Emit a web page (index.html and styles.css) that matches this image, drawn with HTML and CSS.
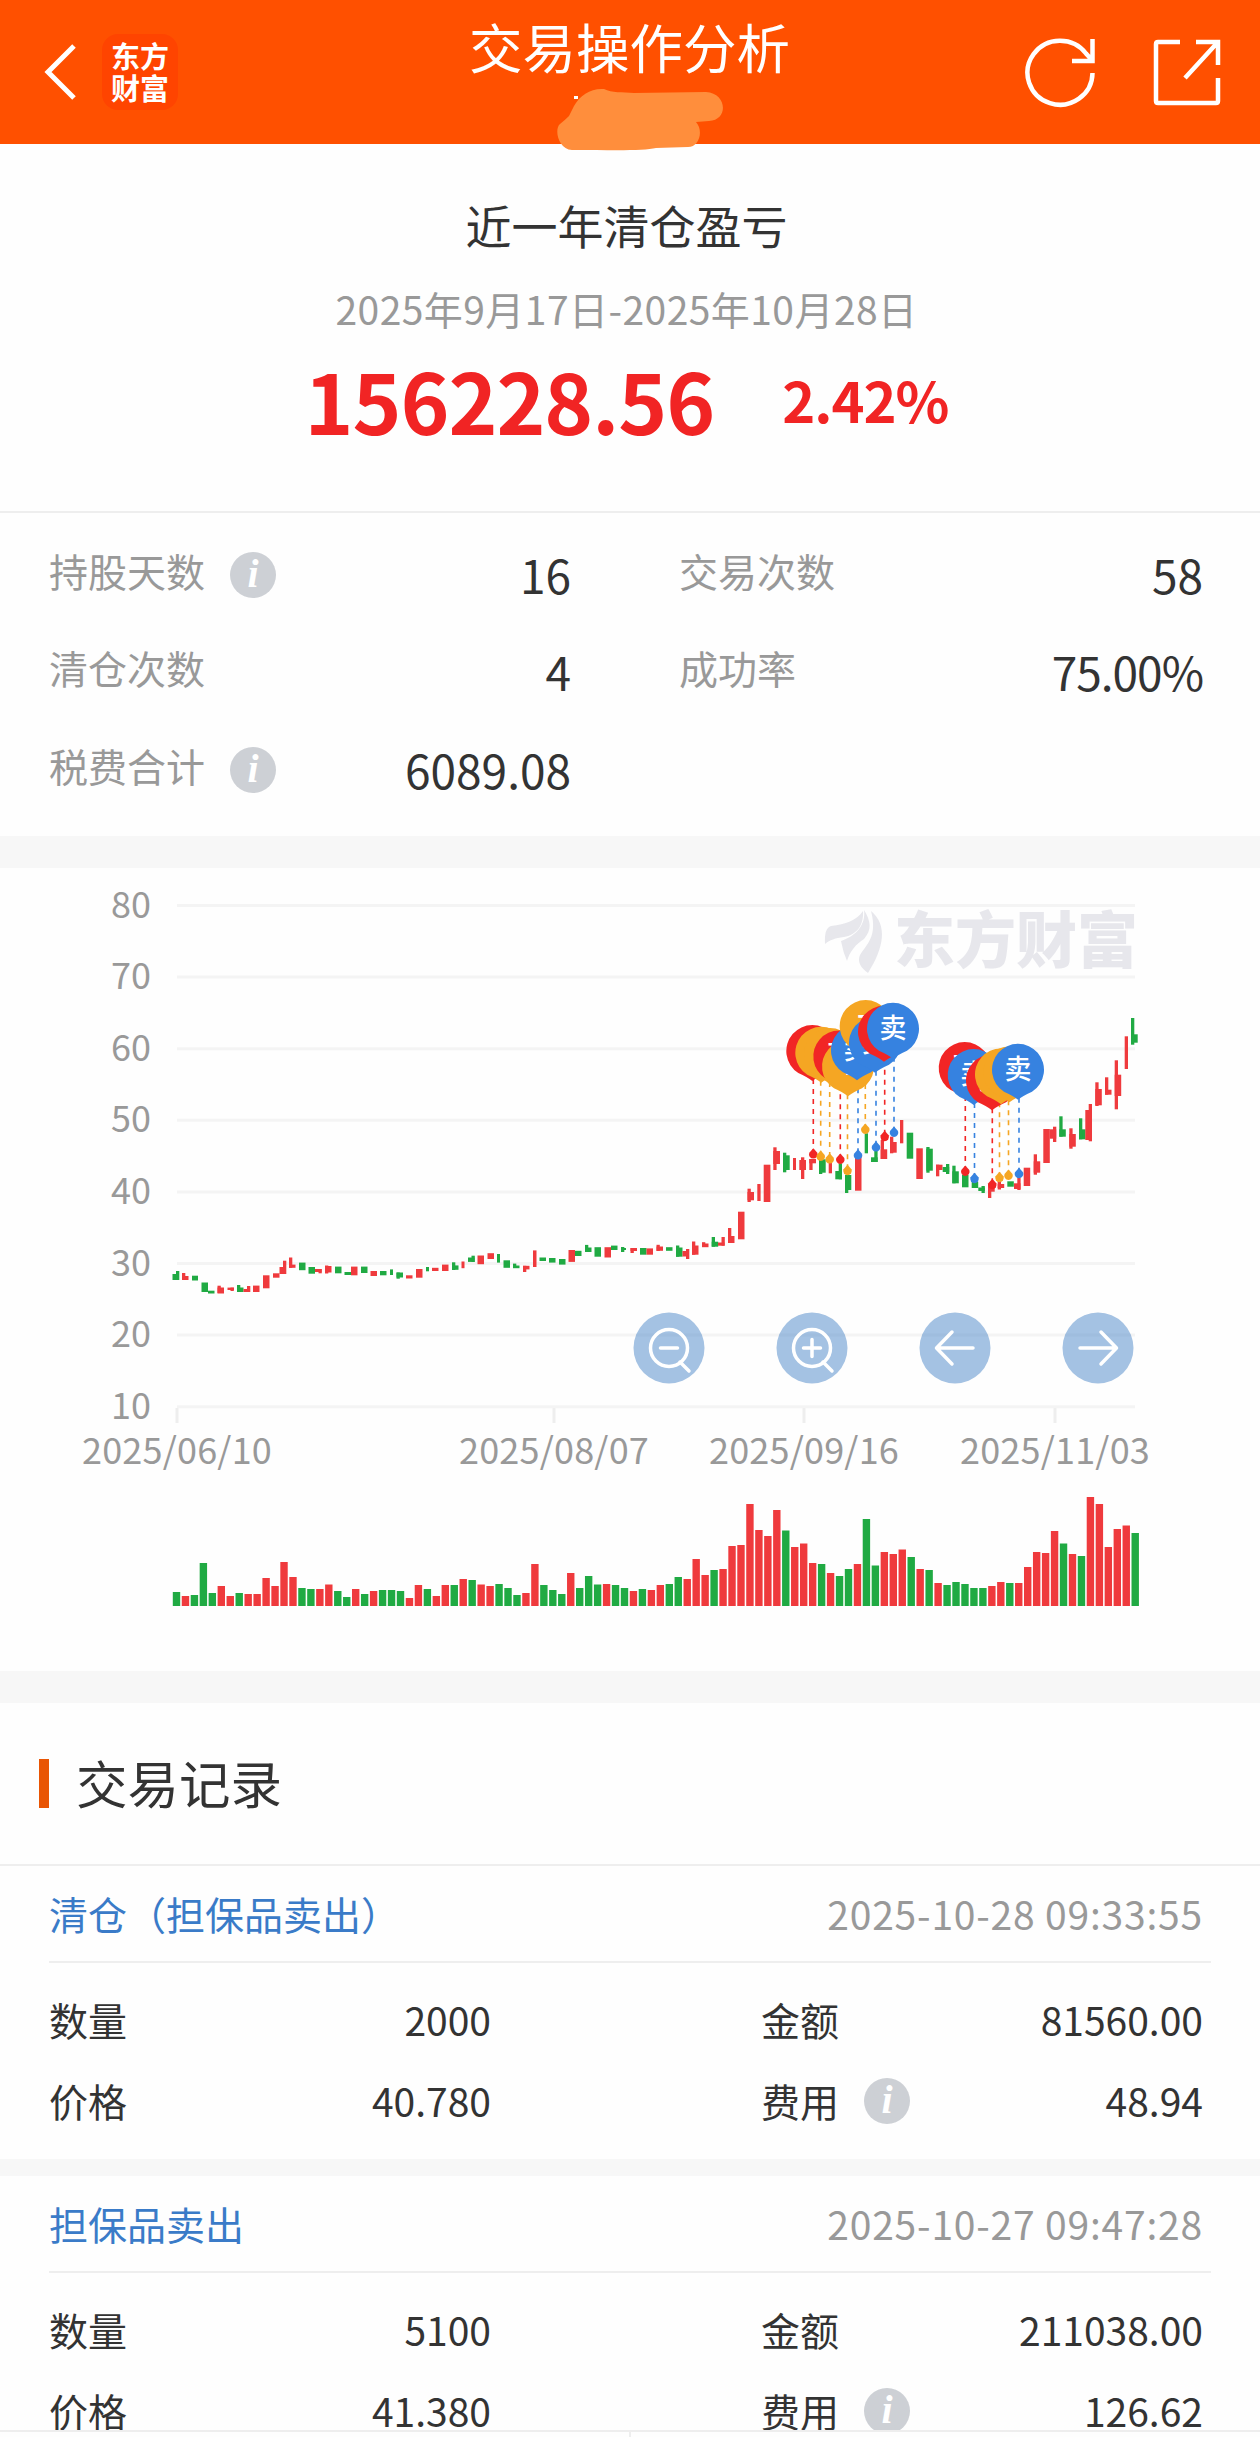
FILE: index.html
```html
<!DOCTYPE html>
<html lang="zh-CN">
  <head>
    <meta charset="UTF-8" />
    <meta name="viewport" content="width=device-width, initial-scale=1.0" />
    <title>交易操作分析</title>
    <link rel="stylesheet" href="styles.css">
  </head>
  <body>
    <header class="topbar">
      <div class="topbar-left">
        <svg class="back" viewBox="0 0 36 60"><path d="M32 4 6 30 32 56" /></svg>
        <div class="brand"><span>东方</span><span>财富</span></div>
      </div>
      <h1>交易操作分析</h1>
      <div class="topbar-right">
        <svg class="icon" viewBox="0 0 72 72">
          <path d="M68.500 37A32.500 32 0 1 1 62 17.500L68 24M68.500 3V25H48" />
        </svg>
        <svg class="icon" viewBox="0 0 72 72">
          <path d="M28 6H6Q4 6 4 8V65Q4 67 6 67H64Q66 67 66 65V42M44 6H66V29M66 6 33 42" />
        </svg>
      </div>
      <svg class="scribble" viewBox="0 0 170 64">
        <path class="speck" d="M18 8h4v3h-4z" />
        <path d="M18 18C24 7 35 0 48 1C56 5 66 4 78 5L150 4C171 5 173 32 153 33L140 34C148 43 143 59 132 59L100 60C88 63 60 62 16 62C2 61-2 41 4 36Q9 32 13 28Z" />
      </svg>
    </header>

    <main>
      <section class="summary">
        <h2>近一年清仓盈亏</h2>
        <div class="period">2025年9月17日-2025年10月28日</div>
        <div class="profit">
          <span class="amount">156228.56</span>
          <span class="rate">2.42%</span>
        </div>
      </section>

      <section class="stats">
        <div class="stat"><label>持股天数</label><i class="info">i</i><b>16</b></div>
        <div class="stat"><label>交易次数</label><b>58</b></div>
        <div class="stat"><label>清仓次数</label><b>4</b></div>
        <div class="stat"><label>成功率</label><b class="percent">75.00%</b></div>
        <div class="stat"><label>税费合计</label><i class="info">i</i><b>6089.08</b></div>
      </section>

      <section class="chart">
        <svg id="chart" viewBox="0 0 1260 803">
          <g id="grid"></g>
          <g class="watermark">
            <path d="M825 76Q824 60 831 58C846 56 856 53 863 43C864 58 856 67 844 69C835 70 830 72 825 76Z" />
            <path d="M841 73C856 68 866 57 864 42C871 53 872 62 864 71C856 76 850 83 847 93Q843 84 841 73Z" />
            <path d="M871 43C888 57 884 80 868 105C861 100 857 94 860 87C866 77 878 69 871 43Z" />
            <text x="894" y="95">东方财富</text>
          </g>
          <g id="candles"></g>
          <g id="marks"></g>
          <g id="volumes"></g>
        </svg>
        <div class="chart-tools">
          <svg viewBox="0 0 72 72"><circle class="disc" cx="36" cy="36" r="35.500" /><circle cx="36" cy="36" r="18.500" /><path d="M27.500 36h17M47 50l9 9" /></svg>
          <svg viewBox="0 0 72 72"><circle class="disc" cx="36" cy="36" r="35.500" /><circle cx="36" cy="36" r="18.500" /><path d="M27.500 36h17M36 27.500v17M47 50l9 9" /></svg>
          <svg viewBox="0 0 72 72"><circle class="disc" cx="36" cy="36" r="35.500" /><path d="M54 36H18M33 20 17.500 36 33 52" /></svg>
          <svg viewBox="0 0 72 72"><circle class="disc" cx="36" cy="36" r="35.500" /><path d="M18 36H54M39 20 54.500 36 39 52" /></svg>
        </div>
      </section>

      <section class="records">
        <h3>交易记录</h3>
        <div class="record">
          <div class="record-head"><a>清仓（担保品卖出）</a><time>2025-10-28 09:33:55</time></div>
          <div class="record-body">
            <div class="cell"><label>数量</label><b>2000</b></div>
            <div class="cell"><label>金额</label><b>81560.00</b></div>
            <div class="cell"><label>价格</label><b>40.780</b></div>
            <div class="cell"><label>费用</label><i class="info">i</i><b>48.94</b></div>
          </div>
        </div>
        <div class="record">
          <div class="record-head"><a>担保品卖出</a><time>2025-10-27 09:47:28</time></div>
          <div class="record-body">
            <div class="cell"><label>数量</label><b>5100</b></div>
            <div class="cell"><label>金额</label><b>211038.00</b></div>
            <div class="cell"><label>价格</label><b>41.380</b></div>
            <div class="cell"><label>费用</label><i class="info">i</i><b>126.62</b></div>
          </div>
        </div>
      </section>
    </main>

    <footer class="tabs"><div></div><div></div></footer>

    <script src="chart.js"></script>
  </body>
</html>
```
FILE: styles.css
```css
* {
  box-sizing: border-box;
}
body {
  margin: 0;
  height: 2437px;
  display: flex;
  flex-direction: column;
  overflow: hidden;
  background: #fefefe;
  color: #333;
  font-family: "Noto Sans CJK SC", sans-serif;
  font-size: 39px;
}
h1,
h2,
h3 {
  margin: 0;
  font-weight: 400;
}
b {
  font-weight: 400;
}
svg {
  display: block;
}

/* top bar */
.topbar {
  position: relative;
  flex: none;
  height: 144px;
  padding: 0 36px 0 42px;
  display: grid;
  grid-template-columns: 1fr auto 1fr;
  background: #ff5000;
  color: #fff;
}
.topbar h1 {
  padding-right: 7px;
  font-size: 53.5px;
  line-height: 92px;
}
.topbar-left,
.topbar-right {
  display: flex;
  align-items: center;
}
.topbar-right {
  justify-content: flex-end;
  gap: 56px;
}
.back {
  width: 36px;
  height: 60px;
}
.back path,
.icon path {
  fill: none;
  stroke: #fff;
  stroke-width: 5;
}
.icon {
  width: 72px;
  height: 72px;
}
.icon path {
  stroke-width: 4.5;
}
.brand {
  width: 76px;
  height: 76px;
  margin-left: 24px;
  padding-bottom: 2px;
  display: flex;
  flex-direction: column;
  align-items: center;
  justify-content: center;
  border-radius: 16px;
  background: #ff4400;
  font-size: 29px;
  font-weight: 700;
  line-height: 32px;
}
.scribble {
  position: absolute;
  left: 556px;
  top: 88px;
  width: 170px;
  height: 64px;
  fill: #ff8e3c;
  z-index: 1;
}
.scribble .speck {
  fill: #fff;
}

main {
  flex: 1;
  min-height: 0;
  overflow: hidden;
}

/* profit summary */
.summary {
  height: 367px;
  padding: 44px 7px 0 0;
  text-align: center;
}
.summary h2 {
  font-size: 46px;
  line-height: 72px;
}
.period {
  margin-top: 18px;
  line-height: 60px;
  letter-spacing: 0.45px;
  color: #999;
}
.profit {
  display: flex;
  justify-content: center;
  align-items: center;
  gap: 68px;
  margin-top: 11px;
  line-height: 100px;
  font-weight: 700;
  color: #f12424;
}
.amount {
  font-size: 83px;
  letter-spacing: -1px;
}
.rate {
  font-size: 56px;
  letter-spacing: -1px;
}

/* stats */
.stats {
  height: 325px;
  padding: 8px 57px 0 49px;
  display: grid;
  grid-template-columns: 522px 524px;
  grid-auto-rows: 97.5px;
  column-gap: 108px;
  border-top: 2px solid #eee;
}
.stat,
.cell {
  display: flex;
  align-items: center;
}
.stat label {
  color: #999;
}
.stat b,
.cell b {
  margin-left: auto;
}
.stat b {
  padding-top: 8px;
  font-size: 46px;
}
.stat .percent {
  letter-spacing: -1px;
}
.info {
  width: 46px;
  height: 46px;
  margin-left: 25px;
  border-radius: 50%;
  background: #cdd0d5;
  color: #fff;
  font: italic bold 40px/43px "Liberation Serif", serif;
  text-align: center;
}
.stat .info {
  margin-top: 10px;
}
.cell .info {
  margin-top: 3px;
}

/* price chart */
.chart {
  position: relative;
  height: 867px;
  border-top: 32px solid #f7f7f7;
  border-bottom: 32px solid #f7f7f7;
}
#chart {
  width: 1260px;
  height: 803px;
}
#grid line {
  stroke: #f4f4f4;
  stroke-width: 3;
}
#grid .tick {
  stroke: #eee;
}
#grid text {
  fill: #999;
  font-size: 36px;
  text-anchor: end;
}
#grid .date {
  text-anchor: middle;
  letter-spacing: 0.2px;
}
.watermark {
  fill: #e7e7ec;
}
.watermark text {
  font-size: 61px;
  font-weight: 900;
}
#marks text {
  fill: #fff;
  font-size: 27px;
  font-weight: 500;
  text-anchor: middle;
}
#marks line {
  stroke-width: 1.6;
  stroke-dasharray: 5 5;
}
.up {
  fill: #ef3a3d;
}
.down {
  fill: #20aa43;
}
.chart-tools {
  position: absolute;
  left: 633px;
  top: 444px;
  display: flex;
  gap: 71px;
}
.chart-tools svg {
  width: 72px;
  height: 72px;
  fill: none;
  stroke: #fff;
  stroke-width: 3.5;
  stroke-linecap: round;
  stroke-linejoin: round;
}
.chart-tools .disc {
  fill: rgba(73, 133, 200, 0.5);
  stroke: none;
}

/* records */
.records h3 {
  height: 163px;
  padding-left: 39px;
  display: flex;
  align-items: center;
  gap: 27px;
  border-bottom: 2px solid #eee;
  font-size: 51.5px;
  line-height: 70px;
  padding-bottom: 3px;
}
.records h3::before {
  content: "";
  width: 10px;
  height: 49px;
  margin-top: 3px;
  background: #e95504;
}
.record {
  height: 310px;
  padding: 0 49px;
  border-bottom: 17px solid #f7f7f7;
}
.record-head {
  height: 97px;
  padding: 0 8px 2px 0;
  display: flex;
  align-items: center;
  justify-content: space-between;
  border-bottom: 2px solid #eee;
}
.record-head a {
  color: #3a7bc8;
}
.record-head time {
  color: #999;
  letter-spacing: 0.8px;
}
.record-body {
  padding: 15px 8px 0 0;
  display: grid;
  grid-template-columns: 442px 442px;
  column-gap: 270px;
  grid-auto-rows: 81px;
}

.tabs {
  flex: none;
  height: 7px;
  display: flex;
  border-top: 2px solid #eee;
}
.tabs div {
  flex: 1;
}
.tabs div + div {
  border-left: 2px solid #eee;
}
```
FILE: chart.js
```js
const NS = "http://www.w3.org/2000/svg";

function add(parentId, tag, attrs, text) {
  const el = document.createElementNS(NS, tag);
  for (const key in attrs) el.setAttribute(key, attrs[key]);
  if (text) el.textContent = text;
  document.getElementById(parentId).appendChild(el);
}

// grid lines and axis labels
for (let i = 0; i < 8; i++) {
  const y = 37.5 + i * 71.6;
  add("grid", "line", { x1: 177, x2: 1135, y1: y, y2: y });
  add("grid", "text", { x: 151, y: y + 12 }, 80 - i * 10);
}
[[177, "2025/06/10"], [554, "2025/08/07"], [804, "2025/09/16"], [1055, "2025/11/03"]].forEach(([x, label]) => {
  add("grid", "line", { class: "tick", x1: x, x2: x, y1: 540, y2: 555 });
  add("grid", "text", { class: "date", x: x, y: 596 }, label);
});

// candles: direction, x, width, open/close top and bottom, [wick x, wick top, wick bottom]
const candles = [
  ["G", 172.5, 6.5, 406, 412, 176, 403, 412], ["R", 182, 6.5, 408, 412, 182, 405, 412], ["G", 192, 6, 407.7, 412.5],
  ["G", 201.5, 6.5, 414.5, 424], ["G", 208, 6.5, 422.7, 425.5], ["R", 217.5, 6.5, 419.5, 425.5, 217.5, 417.7, 425],
  ["R", 227.5, 6.5, 419.6, 422, 230.5, 419.6, 423], ["G", 237, 6.5, 419.5, 424, 237, 417, 424], ["R", 243.5, 6.5, 421, 424, 247, 418, 424],
  ["R", 253, 6.5, 417.6, 424], ["R", 263, 6.5, 407.3, 420.3], ["R", 273, 6.5, 405.3, 409.7],
  ["R", 279.5, 6.5, 399, 406, 283, 392.7, 406], ["R", 289, 6.5, 396.6, 399.8, 289, 389.5, 399.8], ["G", 299, 6.5, 394.6, 402.2],
  ["G", 308.5, 6.5, 399, 405.7], ["R", 315, 6.5, 401, 404, 318.5, 401, 405.3], ["R", 325, 6.5, 398, 404.5, 325, 397.5, 405.5],
  ["G", 335, 6.5, 398.6, 405.3], ["G", 344.5, 6.5, 404, 407], ["R", 351, 6.5, 398.6, 407.3],
  ["G", 361, 6.5, 398.6, 405], ["R", 370.5, 6.5, 403, 408], ["G", 380, 6.5, 403, 407.3],
  ["G", 390, 3, 401.4, 407], ["G", 396.5, 6.5, 404.5, 409.5, 396.5, 404.5, 410.7], ["R", 406, 6.5, 407.3, 410.5],
  ["R", 416, 6.5, 401, 409.7], ["G", 426, 3, 399, 403.3], ["R", 432, 6.5, 399.8, 403],
  ["R", 442, 6.5, 396.6, 403], ["G", 452, 6.5, 397.4, 401.8, 452, 394.3, 402], ["R", 461.5, 3, 393.5, 400.2],
  ["G", 468, 6.5, 389.5, 393.9, 471.5, 387.7, 394], ["R", 477.5, 6.5, 387.5, 396.2], ["R", 487.5, 6.5, 385.2, 391],
  ["G", 497, 3, 386, 394.6], ["G", 503.5, 6.5, 392.3, 399.8], ["G", 513, 6.5, 397.5, 400.2, 513, 395.6, 400],
  ["R", 523, 6.5, 397.8, 401.4, 523, 397.8, 404], ["R", 533, 3.5, 382.4, 399], ["G", 539.5, 6.5, 389.5, 393],
  ["G", 549, 6.5, 390, 394.6], ["G", 559, 6.5, 391, 396.6], ["R", 568.5, 6.5, 382, 393.9],
  ["G", 575, 6.5, 382.8, 388], ["G", 585, 6.5, 379.5, 384, 585, 376.9, 384], ["G", 594.5, 6.5, 379.2, 388.7],
  ["R", 604.5, 6.5, 379.2, 389.5], ["G", 611, 6.5, 377.6, 382], ["G", 621, 5, 380, 382, 621, 379, 384],
  ["R", 630.5, 6.5, 380, 383, 630.5, 380, 385], ["G", 640, 6.5, 380, 386.7], ["R", 646.5, 6.5, 380.4, 386.7],
  ["R", 656.5, 6.5, 378.5, 382.8, 656.5, 376.8, 383], ["G", 666, 6.5, 379.2, 382.8], ["G", 676, 6.5, 379.5, 388.7, 676, 377.5, 388.7],
  ["R", 682.5, 6.5, 383, 388.5, 686, 381, 391], ["R", 692, 6.5, 377.5, 386.7, 692, 373.5, 386.7], ["R", 702, 6.5, 375.5, 379.2, 702, 374.2, 379],
  ["G", 711.7, 6.5, 373.7, 378.7, 711.7, 369, 378.7], ["R", 718, 6.5, 374.5, 377.7, 721.5, 369, 377.7], ["R", 728, 6.5, 368, 375, 728, 360, 375],
  ["R", 738, 6.5, 343.7, 371.3], ["R", 747.5, 6.5, 324, 332.3, 747.5, 320.7, 334], ["R", 757.3, 3.3, 316, 333],
  ["R", 763.7, 6.7, 296.7, 334], ["R", 773.3, 6.7, 283, 296, 773.3, 279.3, 302], ["G", 783, 6.7, 287.3, 302, 783, 284.7, 304.3],
  ["R", 793, 3, 290, 302], ["R", 799.3, 6.7, 292, 302, 801, 289.3, 311], ["R", 809.3, 6.7, 291, 295.3, 809.3, 291, 302],
  ["G", 819, 6.7, 291.3, 304.7, 819, 291, 306], ["R", 828.7, 3.3, 293.7, 305.3], ["G", 835.3, 6.7, 303, 311.3, 838.7, 295.3, 311.3],
  ["G", 845, 6.3, 307, 322, 845, 307, 325], ["R", 855, 6.5, 288.7, 322.7], ["G", 864.7, 3.3, 265.3, 285.3],
  ["G", 871, 6.7, 289.3, 294, 874.3, 282, 294], ["R", 880.7, 6.5, 281.3, 291, 880.7, 272, 291], ["R", 890, 6.7, 274, 284.7, 890, 268.7, 285.3],
  ["R", 900, 3.3, 252, 275.3], ["G", 906.7, 6.5, 264.7, 290.7], ["R", 916.3, 6.5, 280.3, 311],
  ["G", 926.3, 6.5, 280.7, 302.7, 926.3, 279, 304.7], ["R", 936, 6.5, 296.7, 302, 936, 296.7, 308.3], ["G", 942.7, 6.5, 299, 304, 946, 296, 306],
  ["G", 952.3, 6.5, 303.3, 315.3, 952.3, 297.7, 315.3], ["G", 962, 6.5, 306.7, 319.3], ["G", 971.7, 6.5, 313.7, 320],
  ["G", 978.3, 6.5, 319.5, 323, 981.5, 318, 325], ["R", 988, 6.7, 316.3, 323.7, 988, 316, 330], ["R", 997.7, 6.5, 316, 320, 997.7, 313, 321.5],
  ["G", 1007.3, 6.5, 313.3, 318.7], ["R", 1014, 6.5, 315.3, 321, 1017.3, 310, 322], ["R", 1023.7, 6.5, 299.7, 318],
  ["R", 1033.7, 6.5, 293.3, 304.7, 1033.7, 286.3, 306.7], ["R", 1043.3, 6.5, 261, 295], ["R", 1049.7, 6.5, 261.3, 270.7, 1053, 258.7, 274],
  ["G", 1059.3, 6.5, 261.3, 268.7, 1059.3, 248.3, 268.7], ["R", 1069.3, 6.5, 266, 278.7, 1069.3, 260.3, 280.7], ["G", 1079, 6.5, 261.3, 271.3, 1079, 250.3, 271.3],
  ["R", 1085.3, 6.5, 242, 272, 1088.7, 236, 273.3], ["R", 1095.3, 6.5, 221, 237.3, 1095.3, 214.3, 238], ["R", 1105, 6.5, 221.7, 226.7, 1105, 209.3, 226.7],
  ["R", 1114.7, 6.5, 206.7, 228, 1114.7, 192.3, 241.3], ["R", 1124.7, 3.3, 168.3, 201], ["G", 1131, 6.7, 166.3, 174.7, 1131, 150, 176.7],
];
candles.forEach(([dir, x, w, top, bottom, wx, wTop, wBottom]) => {
  const cls = dir === "R" ? "up" : "down";
  add("candles", "rect", { class: cls, x: x, y: top, width: w, height: bottom - top });
  if (wx) add("candles", "rect", { class: cls, x: wx, y: wTop, width: 3.3, height: wBottom - wTop });
});

// buy / sell / T markers: color, label, pin x, pin y, line x, dot y
const RED = "#f12525", BLUE = "#3682e0", ORANGE = "#f5a623";
const marks = [
  [RED, "买", 812.3, 183, 813.3, 285.7],
  [ORANGE, "T", 821.3, 184.7, 820.7, 288],
  [ORANGE, "T", 830, 186, 829.7, 290.7],
  [RED, "买", 839.3, 188.3, 840.3, 291],
  [ORANGE, "T", 848, 198.3, 847.5, 302.3],
  [BLUE, "卖", 857, 182.3, 858, 286.7],
  [ORANGE, "T", 865.7, 158, 865.3, 261],
  [BLUE, "卖", 875, 174.7, 876, 278.7],
  [RED, "买", 884, 163.7, 884.7, 268.3],
  [BLUE, "卖", 893, 160.7, 894, 264],
  [RED, "买", 964.7, 200, 965.3, 303],
  [BLUE, "卖", 973.7, 207, 974.5, 310.3],
  [RED, "买", 992, 212.3, 992.3, 316.3],
  [ORANGE, "T", 1001, 206.3, 999.5, 309.3],
  [ORANGE, "T", 1009.5, 204.3, 1008.5, 307],
  [BLUE, "卖", 1018, 201.7, 1019, 305.3],
];
marks.forEach(([color, label, px, py, x, y]) => {
  add("marks", "line", { x1: x, x2: x, y1: py + 28, y2: y, stroke: color });
  add("marks", "path", { d: `M${x} ${y - 5.5}L${x + 4} ${y - 1}A4.300 4.300 0 1 1 ${x - 4} ${y - 1}Z`, fill: color });
});
marks.forEach(([color, label, px, py]) => {
  add("marks", "path", { d: `M${px} ${py + 30}Q${px - 5} ${py + 26} ${px - 14} ${py + 22}A26 26 0 1 1 ${px + 14} ${py + 22}Q${px + 5} ${py + 26} ${px} ${py + 30}Z`, fill: color });
  add("marks", "text", { x: px, y: py + 9 }, label);
});

// volume bars
const volumes =
  "G14 R10 G11 G43 G13 R20 R10 G13 R12 R12 R28 R20 R44 R29 G18 G17 R17 R21.5 G15 G9 R17 G12 R15 G16 G16 G15 R8 R21 " +
  "G17 R10 R21 G21 R27 G26 R21.5 R20 G22 G18 G11 R13 R42 G21 G16 G12 R33 G18 G30 G21.5 R22 G21 G18 R15 G17 R16 R21 " +
  "G22 G29 R27 R47 R31 G36 R37 R60 R61 R102 R76 R70 R96 G75.5 R59 R62.5 R43 G42 R33 G30 G37 R42 G87 G40.5 R54 R52 R56.5 " +
  "G49 R37 G36 R23 G21 G24 G22 G18 G18 R20 R24 G23 R23 R39 R54 R53 R75 G62.5 R52 G50 R109 R102 R59 R77 R80.5 G73";
volumes.split(" ").forEach((v, i) => {
  const h = Number(v.slice(1));
  add("volumes", "rect", { class: v[0] === "R" ? "up" : "down", x: 172.8 + i * 8.96, y: 738 - h, width: 7.4, height: h });
});
```
